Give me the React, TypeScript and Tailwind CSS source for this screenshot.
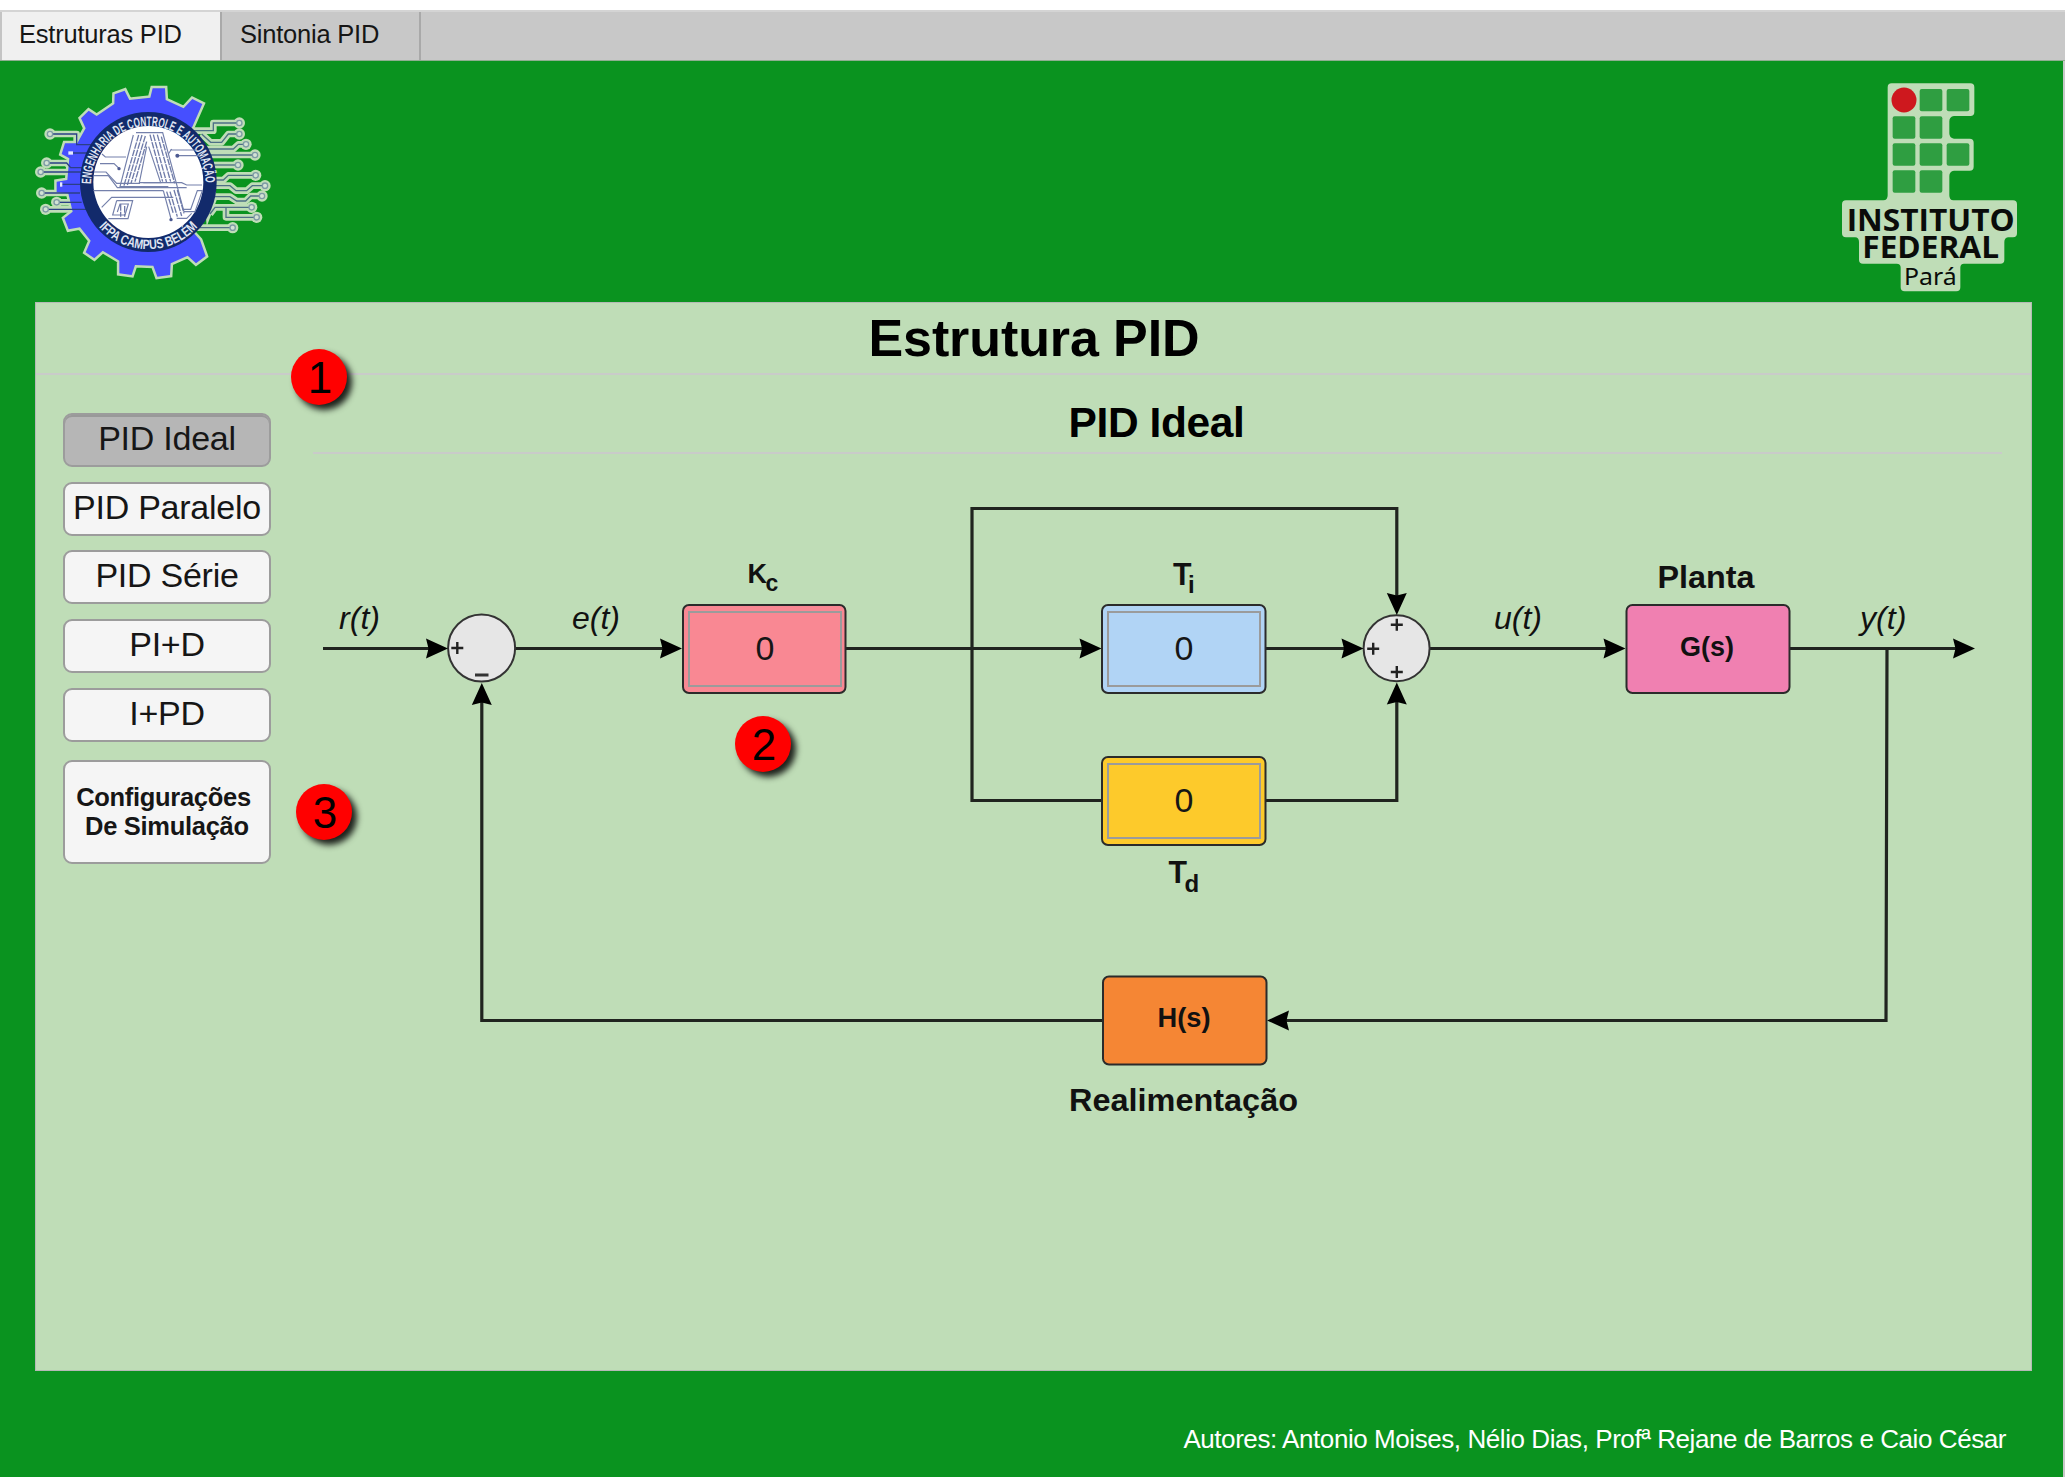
import React from "react";

const SANS = "font-['Liberation_Sans',Arial,sans-serif]";

const GEAR =
  "M577 380 L607 312 L577 297 L551 325 L497 300 L495 265 L458 265 L451 293 L388 300 L374 272 L344 283 L343 312 L290 348 L266 332 L243 355 L257 385 L232 430 L195 430 L185 462 L208 475 L202 540 L170 545 L170 577 L205 580 L218 635 L193 655 L206 688 L240 682 L272 722 L257 757 L283 775 L308 752 L358 782 L358 820 L395 825 L405 795 L460 797 L472 830 L510 825 L512 790 L563 767 L588 790 L617 768 L600 720 L582 700 L445 547 Z";

const RIGHT_TRACES = [
  "M575 392 H640 V369 H718",
  "M605 402 L632 427 H665 L685 402 H718",
  "M620 447 H700 L715 433 H738",
  "M630 465 H765",
  "M640 495 H714",
  "M645 540 H670 L685 526 H767",
  "M645 557 H690 L708 572 H740 L757 557 H795",
  "M640 590 H690 L710 603 H737 L752 588 H786",
  "M630 642 L645 622 H755",
  "M678 622 V652 H770",
  "M585 683 H698",
];
const LEFT_TRACES = [
  "M150 402 H230 V434 H290",
  "M140 489 H200 L212 503 H250",
  "M122 516 H245",
  "M125 579 H240",
  "M170 607 H245",
  "M137 628 H258",
];
const NODES = [
  [718, 369], [718, 402], [738, 433], [765, 465], [714, 495], [767, 526], [795, 557], [786, 588],
  [755, 622], [770, 652], [698, 683], [150, 402], [140, 489], [122, 516], [125, 579], [170, 607], [137, 628],
];

function GearLogo() {
  return (
    <svg width="241" height="200" viewBox="99 249 723 600" className="block">
      <defs>
        <path id="ring-top" d="M273 552 A172 174 0 0 1 617 552" />
        <path id="ring-bottom" d="M252 600 A201 205 0 0 0 638 600" />
      </defs>
      <g fill="none" stroke="#bfddb7" strokeWidth="20" strokeLinejoin="round">
        {[...RIGHT_TRACES, ...LEFT_TRACES].map((d) => (
          <path key={d} d={d} />
        ))}
      </g>
      {NODES.map(([x, y]) => (
        <circle key={`${x}-${y}`} cx={x} cy={y} r="17" fill="#bfddb7" />
      ))}
      <path d="M600 400 L640 500 L650 600 L620 680 Z" fill="#bfddb7" />
      <path d={GEAR} fill="#bfddb7" stroke="#bfddb7" strokeWidth="15" />
      <path d={GEAR} fill="#464fff" />
      <g fill="none" stroke="#4d6f86" strokeWidth="4">
        {RIGHT_TRACES.map((d) => (
          <path key={d} d={d} />
        ))}
      </g>
      <g fill="none" stroke="#2b3f86" strokeWidth="4">
        {LEFT_TRACES.map((d) => (
          <path key={d} d={d} />
        ))}
        <path d="M212 459 H262 M183 553 H245" />
      </g>
      {NODES.map(([x, y]) => (
        <circle key={`${x}-${y}`} cx={x} cy={y} r="8" fill="#d3e3d5" stroke="#7d9aa5" strokeWidth="4" />
      ))}
      <rect x="205" y="454" width="14" height="10" fill="#e4e8ff" />
      <rect x="180" y="547" width="7" height="13" fill="#e4e8ff" />
      <ellipse cx="445" cy="546" rx="205" ry="210" fill="#122a6b" />
      <ellipse cx="445" cy="546" rx="165" ry="168" fill="#fff" />
      <g className="font-['Liberation_Sans',Arial,sans-serif] font-bold" fill="#dfe4f2" fontSize="41">
        <text>
          <textPath href="#ring-top" textLength="540" lengthAdjust="spacingAndGlyphs">
            ENGENHARIA DE CONTROLE E AUTOMAÇÃO
          </textPath>
        </text>
        <text>
          <textPath href="#ring-bottom" startOffset="50%" textAnchor="middle" textLength="335" lengthAdjust="spacingAndGlyphs">
            IFPA CAMPUS BELÉM
          </textPath>
        </text>
      </g>
      <g fill="none" stroke="#7480ab" strokeWidth="3.5">
        <path d="M408 398 H488 L552 635 H585 L607 572" />
        <path d="M400 405 L360 560 H505" />
        <path d="M440 440 L418 548 H482 L446 440" />
        <path d="M306 462 L316 471 H378" />
        <path d="M300 491 H342 L358 506" />
        <path d="M282 516 H318 L350 550 H420" />
        <path d="M282 527 H325 L352 563 H560" />
        <path d="M280 572 H490" />
        <path d="M305 622 L335 592 H520" />
        <path d="M510 450 H590 M528 467 H600 M505 462 L515 447" />
        <path d="M430 548 H545 L560 555 H606" />
        <path d="M548 628 H572 L592 572 H608" />
        <path d="M350 602 H398 L384 656 H325 M350 602 L338 645 H375 L385 612 H360 L352 636" />
        <path d="M490 572 L514 660" />
        <path d="M530 655 H560 L575 640" />
      </g>
      <g fill="none" stroke="#6f7ba9" strokeWidth="4" strokeDasharray="20 3">
        <path d="M416 405 L371 560" />
        <path d="M426 405 L382 555" />
        <path d="M436 408 L393 550" />
        <path d="M440 425 L405 545" />
        <path d="M450 404 L488 545" />
        <path d="M460 404 L500 548" />
        <path d="M472 404 L512 545" />
        <path d="M484 410 L524 550" />
        <path d="M510 575 L532 650" />
        <path d="M522 570 L545 648" />
        <path d="M532 570 L552 640" />
        <path d="M500 575 L520 640" />
        <path d="M362 612 V650 M374 618 V650" />
      </g>
      <circle cx="532" cy="467" r="6" fill="#4d5a91" />
      <circle cx="357" cy="506" r="5" fill="#4d5a91" />
      <circle cx="513" cy="659" r="5" fill="#4d5a91" />
    </svg>
  );
}

const SQUARES = [
  [419, 117], [500, 117], [338, 199], [419, 199], [338, 280], [419, 280], [500, 280], [338, 361], [419, 361],
];

function InstituteLogo() {
  return (
    <svg width="180" height="214" viewBox="180 96 540 642" className="block">
      <path
        fill="#bfddb7"
        d="M335 100 H571 Q583 100 583 112 V186 Q583 198 571 198 H522 Q508 200 508 214 V250 Q508 264 522 266 H569 Q581 266 581 278 V350 Q581 362 569 362 H522 Q508 364 508 378 V436 Q508 451 520 451 H699 Q711 451 711 463 V550 Q711 562 699 562 H684 Q673 564 673 576 V630 Q673 641 661 641 H552 Q541 641 541 653 V712 Q541 724 529 724 H374 Q362 724 362 712 V653 Q362 641 350 641 H249 Q237 641 237 630 V576 Q237 562 225 562 H198 Q186 562 186 550 V463 Q186 451 198 451 H310 Q323 451 323 436 V112 Q323 100 335 100 Z"
      />
      <circle cx="372" cy="150" r="37.5" fill="#ce181e" />
      {SQUARES.map(([x, y]) => (
        <rect key={`${x}-${y}`} x={x} y={y} width="68" height="67" rx="6" fill="#2f9e41" />
      ))}
      <g className="font-['Open_Sans','Noto_Sans',sans-serif]" fill="#0a0c0a">
        <text x="200" y="543" fontSize="92" fontWeight="700" textLength="504" lengthAdjust="spacingAndGlyphs">INSTITUTO</text>
        <text x="247" y="625" fontSize="92" fontWeight="700" textLength="410" lengthAdjust="spacingAndGlyphs">FEDERAL</text>
        <text x="372" y="706" fontSize="72" textLength="158" lengthAdjust="spacingAndGlyphs" className="font-['Noto_Sans',sans-serif]">Pará</text>
      </g>
    </svg>
  );
}

function Badge({ n, className }: { n: number; className: string }) {
  return (
    <div
      className={`absolute flex h-14 w-14 items-center justify-center rounded-full bg-[#ff0000] pl-0.5 pt-0.5 text-[44px] leading-none text-black shadow-[5px_5px_6px_rgba(0,0,0,0.85)] ${className}`}
    >
      {n}
    </div>
  );
}

function MenuButton({ label, active = false }: { label: string; active?: boolean }) {
  return (
    <button
      className={`flex h-[54px] w-full justify-center whitespace-nowrap rounded-[9px] border-2 border-[#9c9c9c] text-[34px] leading-[47px] tracking-[-0.25px] ${
        active ? "bg-[#b6b6b6] shadow-[inset_0_2px_0_#999]" : "bg-[#f5f5f5]"
      }`}
    >
      {label}
    </button>
  );
}

function Field({ className }: { className: string }) {
  return (
    <input
      defaultValue="0"
      className={`absolute border-2 border-[#9b9b9b] text-center text-[34px] leading-none text-[#161616] outline-none ${className}`}
    />
  );
}

function Arrow({ x, y, r = 0 }: { x: number; y: number; r?: number }) {
  return <path transform={`translate(${x} ${y}) rotate(${r})`} d="M0 0 L-22 -10 L-19.5 0 L-22 10 Z" fill="#000" />;
}

function Plus({ x, y }: { x: number; y: number }) {
  return <path d={`M${x - 6} ${y} h12 M${x} ${y - 6} v12`} stroke="#222" strokeWidth="2.4" />;
}

function Diagram() {
  return (
    <div className="relative h-[680px] w-[1689px]">
      <svg width="1689" height="680" viewBox="313 470 1689 680" className="block">
        <g fill="none" stroke="#20241f" strokeWidth="3.2">
          <path d="M323 648.5 H430" />
          <path d="M515 648.5 H665" />
          <path d="M846 648.5 H1085" />
          <path d="M1396.8 600 V508.5 H972 V800.5 H1102" />
          <path d="M1266 648.5 H1347" />
          <path d="M1266 800.5 H1396.8 V700" />
          <path d="M1430 648.5 H1607" />
          <path d="M1790 648.5 H1958" />
          <path d="M1887 648.5 L1886 1020.5 H1286" />
          <path d="M1103 1020.5 H481.8 V702" />
        </g>
        <circle cx="481.6" cy="648" r="33.5" fill="#e6e6e6" stroke="#333" strokeWidth="2" />
        <circle cx="1396.6" cy="648.3" r="33" fill="#e6e6e6" stroke="#333" strokeWidth="2" />
        <Arrow x={448} y={648.5} />
        <Arrow x={682} y={648.5} />
        <Arrow x={1101.5} y={648.5} />
        <Arrow x={1363.5} y={648.5} />
        <Arrow x={1625.5} y={648.5} />
        <Arrow x={1975} y={648.5} />
        <Arrow x={1267} y={1020.5} r={180} />
        <Arrow x={481.8} y={683} r={-90} />
        <Arrow x={1396.8} y={682.5} r={-90} />
        <Arrow x={1396.8} y={615} r={90} />
        <Plus x={457.3} y={648} />
        <Plus x={1396.8} y={624.7} />
        <Plus x={1373.2} y={648.7} />
        <Plus x={1396.8} y={672} />
        <path d="M475 675 h13.5" stroke="#333" strokeWidth="3" />
        <g stroke="#2b2b2b" strokeWidth="2">
          <rect x="683" y="605" width="162.5" height="88" rx="6" fill="#f98893" />
          <rect x="1102" y="605" width="163.5" height="88" rx="6" fill="#b1d4f5" />
          <rect x="1102" y="757" width="163.5" height="88" rx="6" fill="#fdca2b" />
          <rect x="1626.5" y="605" width="163" height="88" rx="6" fill="#f080b1" />
          <rect x="1103" y="976.5" width="163.5" height="88" rx="6" fill="#f58634" />
        </g>
        <g fill="#111">
          <g fontSize="32" fontStyle="italic">
            <text x="339" y="628.5" textLength="41" lengthAdjust="spacingAndGlyphs">r(t)</text>
            <text x="572" y="628.5" textLength="48" lengthAdjust="spacingAndGlyphs">e(t)</text>
            <text x="1494" y="628.5" textLength="48" lengthAdjust="spacingAndGlyphs">u(t)</text>
            <text x="1860" y="628.5" textLength="46.5" lengthAdjust="spacingAndGlyphs">y(t)</text>
          </g>
          <g fontWeight="700">
            <text x="747.5" y="583" fontSize="27">K</text>
            <text x="765.5" y="590.5" fontSize="23">c</text>
            <text x="1173" y="584.7" fontSize="31" textLength="18.5" lengthAdjust="spacingAndGlyphs">T</text>
            <text x="1188" y="593.3" fontSize="24">i</text>
            <text x="1168.5" y="883.3" fontSize="31" textLength="18.5" lengthAdjust="spacingAndGlyphs">T</text>
            <text x="1184.5" y="892" fontSize="24">d</text>
            <text x="1657.5" y="587.5" fontSize="32" textLength="97" lengthAdjust="spacingAndGlyphs">Planta</text>
            <text x="1680" y="656" fontSize="28" textLength="54" lengthAdjust="spacingAndGlyphs">G(s)</text>
            <text x="1157.5" y="1027.3" fontSize="28" textLength="53" lengthAdjust="spacingAndGlyphs">H(s)</text>
            <text x="1069" y="1110.7" fontSize="32" textLength="229" lengthAdjust="spacingAndGlyphs">Realimentação</text>
          </g>
        </g>
      </svg>
      <Field className="left-[375px] top-[141px] h-[76px] w-[154px] bg-[#f98893] pb-px" />
      <Field className="left-[794px] top-[141px] h-[76px] w-[154px] bg-[#b1d4f5] pb-px" />
      <Field className="left-[794px] top-[293px] h-[76px] w-[154px] bg-[#fdca2b] pb-px" />
    </div>
  );
}

export default function App() {
  return (
    <div className={`relative flex h-[1477px] w-[2065px] flex-col overflow-hidden bg-white pt-[10px] text-[#161616] ${SANS}`}>
      <nav className="flex h-[51px] shrink-0 border-b border-t-2 border-b-[#8fae90] border-t-[#d4d4d4] bg-[#c8c8c8] text-[25.5px] leading-[44px] tracking-[-0.22px]">
        <div className="w-[222px] border-x-2 border-l-[#c4c4c4] border-r-[#a9a9a9] bg-[#f0f0f0] pl-[17px]">Estruturas PID</div>
        <div className="w-[199px] border-r-2 border-[#a9a9a9] pl-[18px]">Sintonia PID</div>
      </nav>
      <div className="flex min-h-0 flex-1 flex-col border-r-2 border-[#c8c8c8] bg-[#0a931f]">
        <header className="flex h-[241px] shrink-0 justify-between pl-[33px] pr-[43px] pt-[21px]">
          <div className="pt-px">
            <GearLogo />
          </div>
          <InstituteLogo />
        </header>
        <main className="ml-[35px] flex h-[1069px] w-[1997px] shrink-0 flex-col border border-[#b5b9b5] bg-[#bfddb7]">
          <h1 className="h-[72px] shrink-0 border-b-2 border-[#c9cbc9] pl-px text-center text-[52px] font-bold leading-[70px] tracking-[-0.1px] text-black">
            Estrutura PID
          </h1>
          <div className="flex">
            <aside className="flex w-[277px] flex-col pl-[27px] pr-[42px] pt-[38px]">
              <div className="flex flex-col gap-[14.7px]">
                <MenuButton label="PID Ideal" active />
                <MenuButton label="PID Paralelo" />
                <MenuButton label="PID Série" />
                <MenuButton label="PI+D" />
                <MenuButton label="I+PD" />
              </div>
              <button className="mt-[18.5px] h-[104px] w-full whitespace-pre rounded-[9px] border-2 border-[#9c9c9c] bg-[#f5f5f5] pr-[7px] text-[25.5px] font-bold leading-[29.5px] tracking-[-0.3px]">
                {"Configurações\n De Simulação"}
              </button>
            </aside>
            <section className="w-[1689px]">
              <h2 className="h-[79px] border-b-2 border-[#c9cbc9] pr-0.5 text-center text-[42.5px] font-bold leading-[96px] tracking-[-0.4px] text-black">
                PID Ideal
              </h2>
              <div className="pt-[16px]">
                <Diagram />
              </div>
            </section>
          </div>
        </main>
        <footer className="flex justify-end pr-[57px] pt-[52px] text-[26px] leading-[32px] tracking-[-0.43px] text-white">
          Autores: Antonio Moises, Nélio Dias, Profª Rejane de Barros e Caio César
        </footer>
      </div>
      <Badge n={1} className="left-[291px] top-[349px]" />
      <Badge n={2} className="left-[735px] top-[716px]" />
      <Badge n={3} className="left-[296px] top-[784px]" />
    </div>
  );
}
